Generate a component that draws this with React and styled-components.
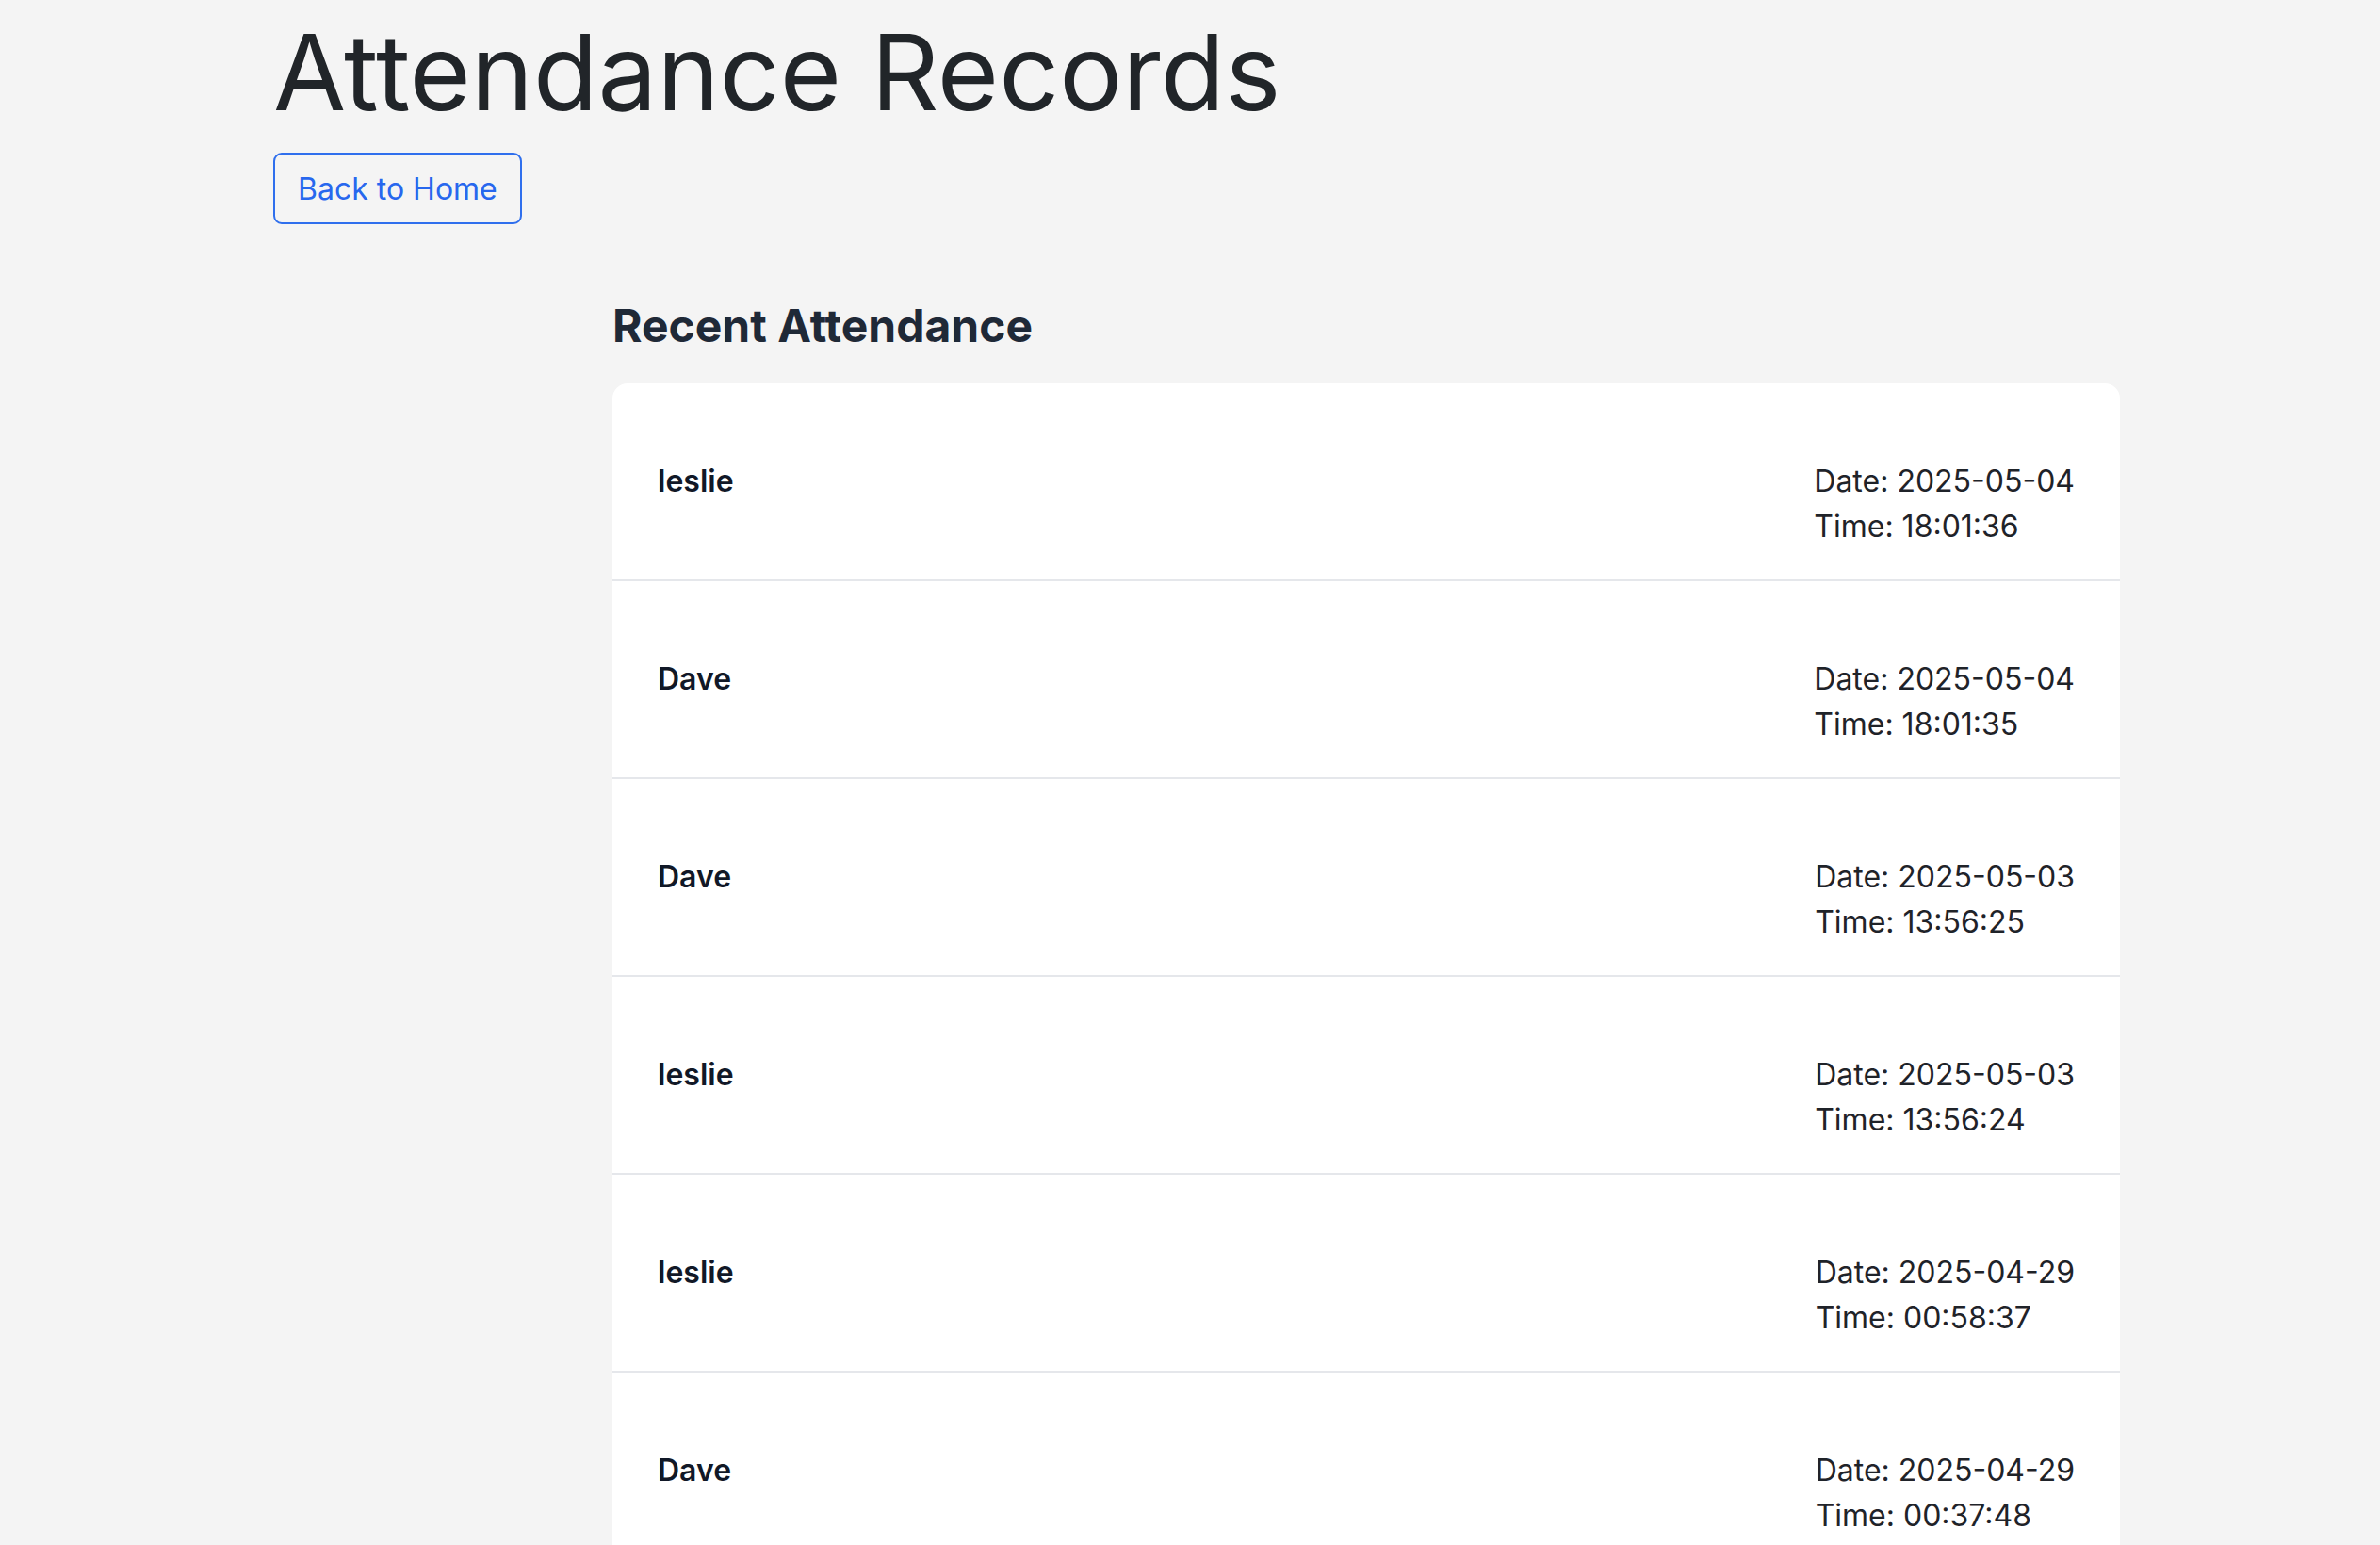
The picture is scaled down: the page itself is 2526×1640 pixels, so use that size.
import React from 'react';
import styled, { createGlobalStyle } from 'styled-components';

const GlobalStyle = createGlobalStyle`
    html, body {
        margin: 0;
        padding: 0;
        background: #f4f4f4;
        font-family: Inter, "Noto Sans", "Liberation Sans", sans-serif;
        color: #212529;
    }
`

const Page = styled.div`
    height: 100vh;
    overflow: hidden;
    padding: 9px 0 0 290px;
    box-sizing: border-box;
`

const Title = styled.h1`
    margin: 0 0 19px;
    font-size: 112px;
    font-weight: 400;
    line-height: 1.2;
    color: #212529;
`

const BackButton = styled.button`
    font-family: inherit;
    font-size: 32px;
    line-height: 48px;
    padding: 13px 24px 11px 24px;
    color: #2767ee;
    background: transparent;
    border: 2px solid #2f6fed;
    border-radius: 9px;
    cursor: pointer;
`

const Section = styled.section`
    width: 1600px;
    margin: 79px 0 0 360px;
`

const SectionTitle = styled.h2`
    margin: 0 0 32px;
    font-size: 48px;
    font-weight: 700;
    line-height: 1.2;
    color: #1f2937;
`

const Card = styled.div`
    background: #ffffff;
    border-radius: 16px;
    overflow: hidden;
`

const Row = styled.div`
    display: flex;
    justify-content: space-between;
    align-items: flex-start;
    padding: 80px 48px 32px;
    border-bottom: 2px solid #e5e7eb;
`

const Name = styled.div`
    font-size: 32px;
    line-height: 48px;
    font-weight: 600;
    color: #111827;
`

const Stamp = styled.div`
    font-size: 32px;
    line-height: 48px;
    color: #1f2329;
`

const records = [
    { name: 'leslie', date: '2025-05-04', time: '18:01:36' },
    { name: 'Dave', date: '2025-05-04', time: '18:01:35' },
    { name: 'Dave', date: '2025-05-03', time: '13:56:25' },
    { name: 'leslie', date: '2025-05-03', time: '13:56:24' },
    { name: 'leslie', date: '2025-04-29', time: '00:58:37' },
    { name: 'Dave', date: '2025-04-29', time: '00:37:48' },
]

export default function App() {
    return (
        <>
            <GlobalStyle />
            <Page>
                <Title>Attendance Records</Title>
                <BackButton>Back to Home</BackButton>
                <Section>
                    <SectionTitle>Recent Attendance</SectionTitle>
                    <Card>
                        {records.map((r, i) => (
                            <Row key={i}>
                                <Name>{r.name}</Name>
                                <Stamp>
                                    <div>Date: {r.date}</div>
                                    <div>Time: {r.time}</div>
                                </Stamp>
                            </Row>
                        ))}
                    </Card>
                </Section>
            </Page>
        </>
    )
}
